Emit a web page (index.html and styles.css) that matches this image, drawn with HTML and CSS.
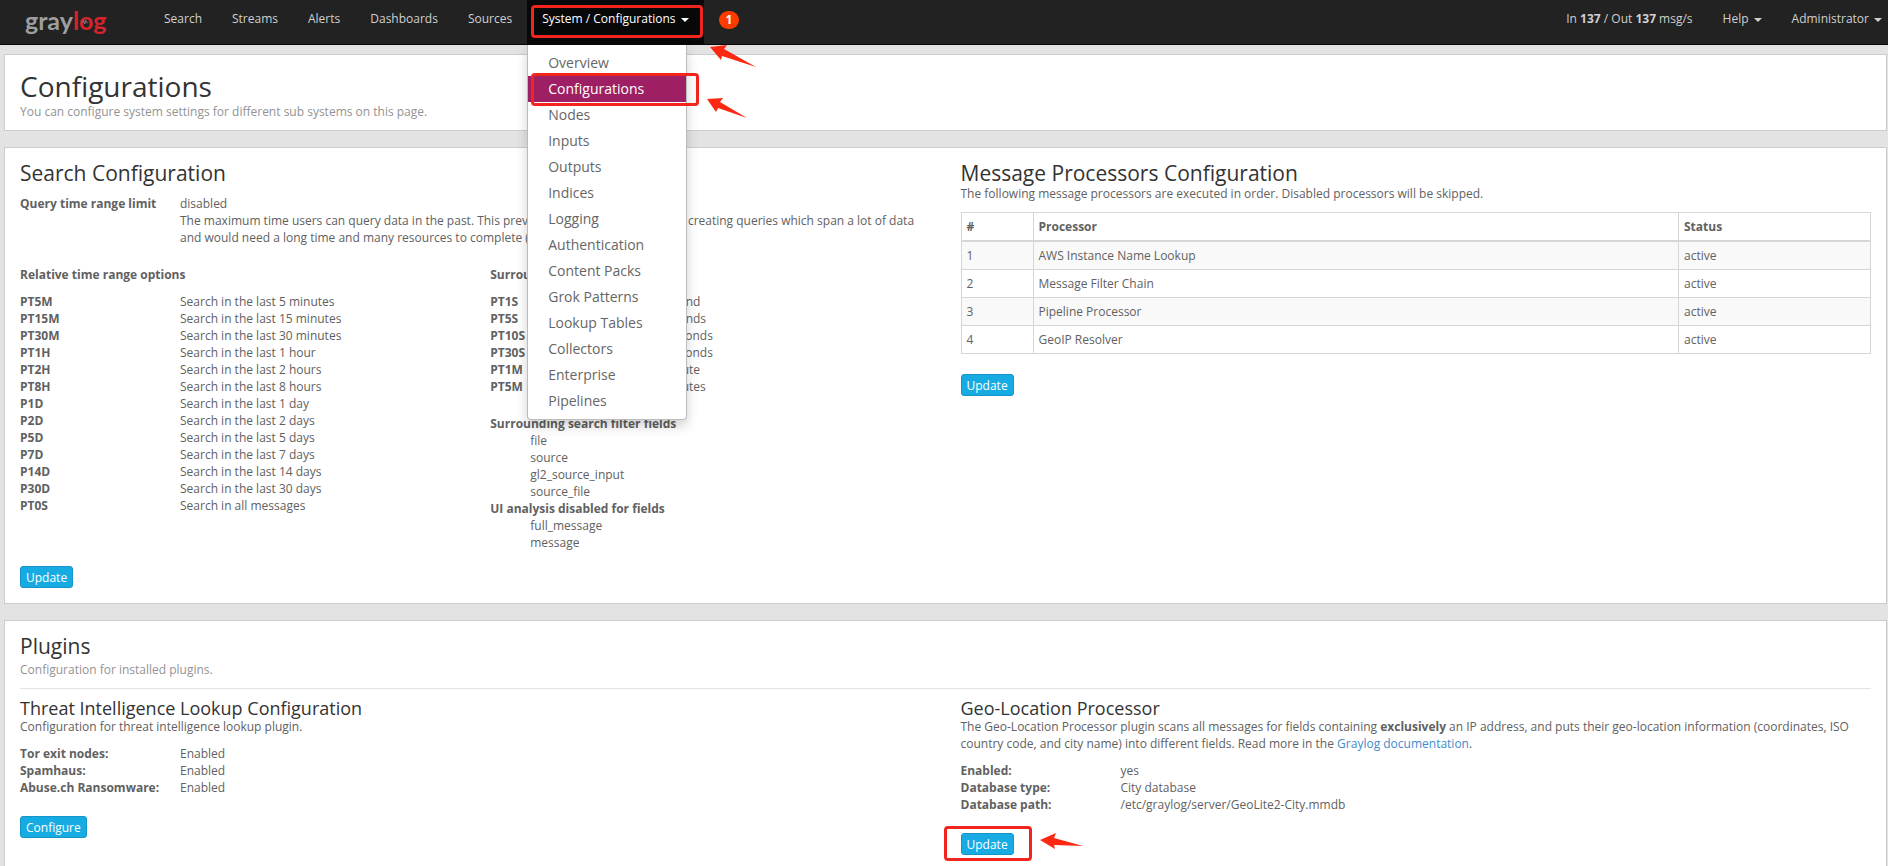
FILE: index.html
```html
<!DOCTYPE html>
<html lang="en">
<head>
<meta charset="utf-8">
<title>Configurations</title>
<link rel="stylesheet" href="styles.css">
</head>
<body>
<nav class="navbar">
  <a class="brand" href="#" aria-label="graylog"><span>gray</span><span class="brand-red">log</span><svg class="brand-pulse" viewBox="0 0 12 12" width="8" height="8" aria-hidden="true"><path d="M1 6h2l1-2 2 5 1-6 2 4h2"/></svg></a>
  <div class="nav-links">
    <a href="#">Search</a>
    <a href="#">Streams</a>
    <a href="#">Alerts</a>
    <a href="#">Dashboards</a>
    <a href="#">Sources</a>
    <div class="dropdown">
      <a class="current" href="#" aria-expanded="true">System / Configurations<span class="caret"></span></a>
      <div class="menu">
        <a href="#">Overview</a>
        <a class="selected" href="#">Configurations</a>
        <a href="#">Nodes</a>
        <a href="#">Inputs</a>
        <a href="#">Outputs</a>
        <a href="#">Indices</a>
        <a href="#">Logging</a>
        <a href="#">Authentication</a>
        <a href="#">Content Packs</a>
        <a href="#">Grok Patterns</a>
        <a href="#">Lookup Tables</a>
        <a href="#">Collectors</a>
        <a href="#">Enterprise</a>
        <a href="#">Pipelines</a>
      </div>
      <span class="mark mark-nav"></span>
      <span class="mark mark-item"></span>
      <svg class="arrow arrow-nav" viewBox="0 0 46 23" width="46" height="23" aria-hidden="true"><path d="M0 2 17 0l-3 4 32 18L12 11l-1 4z"/></svg>
      <svg class="arrow arrow-item" viewBox="0 0 40 21" width="40" height="21" aria-hidden="true"><path d="M0 1 16 0l-3 4 27 16L11 10l-2 4z"/></svg>
    </div>
    <a class="badge" href="#">1</a>
  </div>
  <div class="nav-links nav-right">
    <span class="throughput">In <strong>137</strong> / Out <strong>137</strong> msg/s</span>
    <a href="#">Help<span class="caret"></span></a>
    <a href="#">Administrator<span class="caret"></span></a>
  </div>
</nav>

<main>
  <header class="panel page-head">
    <h1>Configurations</h1>
    <p class="muted">You can configure system settings for different sub systems on this page.</p>
  </header>

  <section class="panel row">
    <div class="col">
      <h2>Search Configuration</h2>
      <dl class="pairs">
        <dt>Query time range limit</dt>
        <dd>disabled<br>The maximum time users can query data in the past. This prevents users from accidentally creating queries which span a lot of data and would need a long time and many resources to complete (if at all).</dd>
      </dl>
      <div class="split">
        <div>
          <strong class="list-title">Relative time range options</strong>
          <dl class="pairs">
            <dt>PT5M</dt><dd>Search in the last 5 minutes</dd>
            <dt>PT15M</dt><dd>Search in the last 15 minutes</dd>
            <dt>PT30M</dt><dd>Search in the last 30 minutes</dd>
            <dt>PT1H</dt><dd>Search in the last 1 hour</dd>
            <dt>PT2H</dt><dd>Search in the last 2 hours</dd>
            <dt>PT8H</dt><dd>Search in the last 8 hours</dd>
            <dt>P1D</dt><dd>Search in the last 1 day</dd>
            <dt>P2D</dt><dd>Search in the last 2 days</dd>
            <dt>P5D</dt><dd>Search in the last 5 days</dd>
            <dt>P7D</dt><dd>Search in the last 7 days</dd>
            <dt>P14D</dt><dd>Search in the last 14 days</dd>
            <dt>P30D</dt><dd>Search in the last 30 days</dd>
            <dt>PT0S</dt><dd>Search in all messages</dd>
          </dl>
        </div>
        <div>
          <strong class="list-title">Surrounding time range options</strong>
          <dl class="pairs">
            <dt>PT1S</dt><dd>1 second</dd>
            <dt>PT5S</dt><dd>5 seconds</dd>
            <dt>PT10S</dt><dd>10 seconds</dd>
            <dt>PT30S</dt><dd>30 seconds</dd>
            <dt>PT1M</dt><dd>1 minute</dd>
            <dt>PT5M</dt><dd>5 minutes</dd>
          </dl>
          <dl class="fields">
            <dt>Surrounding search filter fields</dt>
            <dd>file</dd><dd>source</dd><dd>gl2_source_input</dd><dd>source_file</dd>
            <dt>UI analysis disabled for fields</dt>
            <dd>full_message</dd><dd>message</dd>
          </dl>
        </div>
      </div>
      <button class="btn" type="button">Update</button>
    </div>
    <div class="col">
      <h2>Message Processors Configuration</h2>
      <p>The following message processors are executed in order. Disabled processors will be skipped.</p>
      <table>
        <thead><tr><th class="c-num">#</th><th>Processor</th><th class="c-status">Status</th></tr></thead>
        <tbody>
          <tr><td>1</td><td>AWS Instance Name Lookup</td><td>active</td></tr>
          <tr><td>2</td><td>Message Filter Chain</td><td>active</td></tr>
          <tr><td>3</td><td>Pipeline Processor</td><td>active</td></tr>
          <tr><td>4</td><td>GeoIP Resolver</td><td>active</td></tr>
        </tbody>
      </table>
      <button class="btn" type="button">Update</button>
    </div>
  </section>

  <section class="panel plugins">
    <div class="plugins-head">
      <h2>Plugins</h2>
      <p class="muted">Configuration for installed plugins.</p>
    </div>
    <div class="row">
      <div class="col">
        <h3>Threat Intelligence Lookup Configuration</h3>
        <p>Configuration for threat intelligence lookup plugin.</p>
        <dl class="pairs">
          <dt>Tor exit nodes:</dt><dd>Enabled</dd>
          <dt>Spamhaus:</dt><dd>Enabled</dd>
          <dt>Abuse.ch Ransomware:</dt><dd>Enabled</dd>
        </dl>
        <button class="btn" type="button">Configure</button>
      </div>
      <div class="col">
        <h3>Geo-Location Processor</h3>
        <p>The Geo-Location Processor plugin scans all messages for fields containing <strong>exclusively</strong> an IP address, and puts their geo-location information (coordinates, ISO country code, and city name) into different fields. Read more in the <a class="link" href="#">Graylog documentation</a>.</p>
        <dl class="pairs">
          <dt>Enabled:</dt><dd>yes</dd>
          <dt>Database type:</dt><dd>City database</dd>
          <dt>Database path:</dt><dd>/etc/graylog/server/GeoLite2-City.mmdb</dd>
        </dl>
        <div class="marked">
          <button class="btn" type="button">Update</button>
          <span class="mark mark-btn"></span>
          <svg class="arrow arrow-btn" viewBox="0 0 43 17" width="43" height="17" aria-hidden="true"><path d="M0 7 16 0l-2 5 29 8-29-1 1 4z"/></svg>
        </div>
      </div>
    </div>
  </section>
</main>
</body>
</html>
```
FILE: styles.css
```css
* { box-sizing: border-box; }

body {
  margin: 0;
  background: #e3e3e3;
  color: #616161;
  font: 12px/17px "Open Sans", sans-serif;
  overflow: hidden;
}

h1, h2, h3, p, dl, dd { margin: 0; }
h1, h2, h3 { color: #333; font-weight: 400; }
h1 { font-size: 28px; line-height: 34px; }
h2 { font-size: 21px; line-height: 24px; }
h3 { font-size: 18px; line-height: 20px; }
a { text-decoration: none; }

/* Navigation bar */
.navbar {
  display: flex;
  height: 45px;
  padding: 0 6px 0 25px;
  background: #222;
  border-bottom: 1px solid #080808;
}

.brand {
  position: relative;
  width: 124px;
  color: #9e9e9e;
  font: 700 25px/40px Lato, sans-serif;
}
.brand-red { color: #d3242b; }
.brand-pulse {
  position: absolute;
  left: 56px;
  top: 18px;
  fill: none;
  stroke: #999;
}

.nav-links { display: flex; line-height: 20px; }
.nav-links a, .throughput { color: #d0d0d0; padding: 9px 15px 15px; }
.nav-right { margin-left: auto; }
.nav-right a:last-child { padding-right: 0; }

.caret {
  display: inline-block;
  margin-left: 5px;
  border: 4px solid transparent;
  border-top-color: currentColor;
  border-bottom: 0;
  vertical-align: middle;
}

.dropdown { position: relative; z-index: 2; display: flex; }
.dropdown .current { background: #080808; color: #fff; }

.nav-links .badge {
  align-self: flex-start;
  margin: 11px 15px;
  padding: 0 7px;
  border-radius: 9px;
  background: #ff3b00;
  color: #fff;
  font-weight: 700;
  line-height: 18px;
}

.menu {
  position: absolute;
  left: 0;
  top: 45px;
  width: 160px;
  padding: 5px 0;
  background: #fff;
  border: 1px solid #bbb;
  border-top: 0;
  border-radius: 0 0 4px 4px;
  box-shadow: 0 6px 12px rgba(0, 0, 0, .18);
  font-size: 14px;
}
.menu a { display: block; padding: 3px 20px; color: #666; }
.menu .selected { background: #9e1f63; color: #fff; }

/* Red call-outs */
.mark {
  position: absolute;
  border: 3px solid #f1251d;
  border-radius: 4px;
  pointer-events: none;
}
.mark-nav { left: 4px; top: 5px; width: 172px; height: 33px; }
.mark-item { left: 4px; top: 73px; width: 168px; height: 33px; }
.mark-btn { left: -17px; top: -7px; width: 88px; height: 35px; }
.arrow { position: absolute; fill: #fe2712; }
.arrow-nav { left: 183px; top: 45px; }
.arrow-item { left: 180px; top: 98px; }
.arrow-btn { left: 79px; top: 0; }
.marked { position: relative; }

/* Panels */
main { display: grid; gap: 16px; padding: 9px 1px 0 4px; }
.panel { background: #fff; border: 1px solid #ccc; }
.page-head { padding: 14px 15px 10px; }
.muted { color: #939393; }

.row { display: grid; grid-template-columns: 1fr 1fr; }
.col { padding: 13px 15px 15px; }

.pairs { display: grid; grid-template-columns: 160px 1fr; }
dt, th { font-weight: 700; }
.col > h2 + .pairs { margin-top: 10px; }

.split { display: grid; grid-template-columns: 1fr 1fr; column-gap: 30px; margin: 20px 0 15px; }
.list-title { display: block; margin-bottom: 10px; }
.fields { margin-top: 20px; }
.fields dd { margin-left: 40px; }

table {
  width: 100%;
  margin: 10px 0 20px;
  border-collapse: collapse;
  table-layout: fixed;
}
th, td { padding: 5px; border: 1px solid #d6d6d6; text-align: left; }
thead th { border-bottom-width: 2px; }
tbody tr:nth-child(odd) { background: #f9f9f9; }
.c-num { width: 72px; }
.c-status { width: 192px; }

.btn {
  display: block;
  height: 22px;
  padding: 0 5px;
  border: 1px solid #1694ca;
  border-radius: 3px;
  background: #16ace3;
  color: #fff;
  font: inherit;
}

.plugins-head { margin: 13px 15px 0; padding-bottom: 10px; border-bottom: 1px solid #e3e3e3; }
.plugins-head .muted { margin-top: 3px; }
.plugins .col { padding-top: 9px; }
.plugins .pairs { margin: 10px 0 20px; }
.link { color: #428bca; }
```
